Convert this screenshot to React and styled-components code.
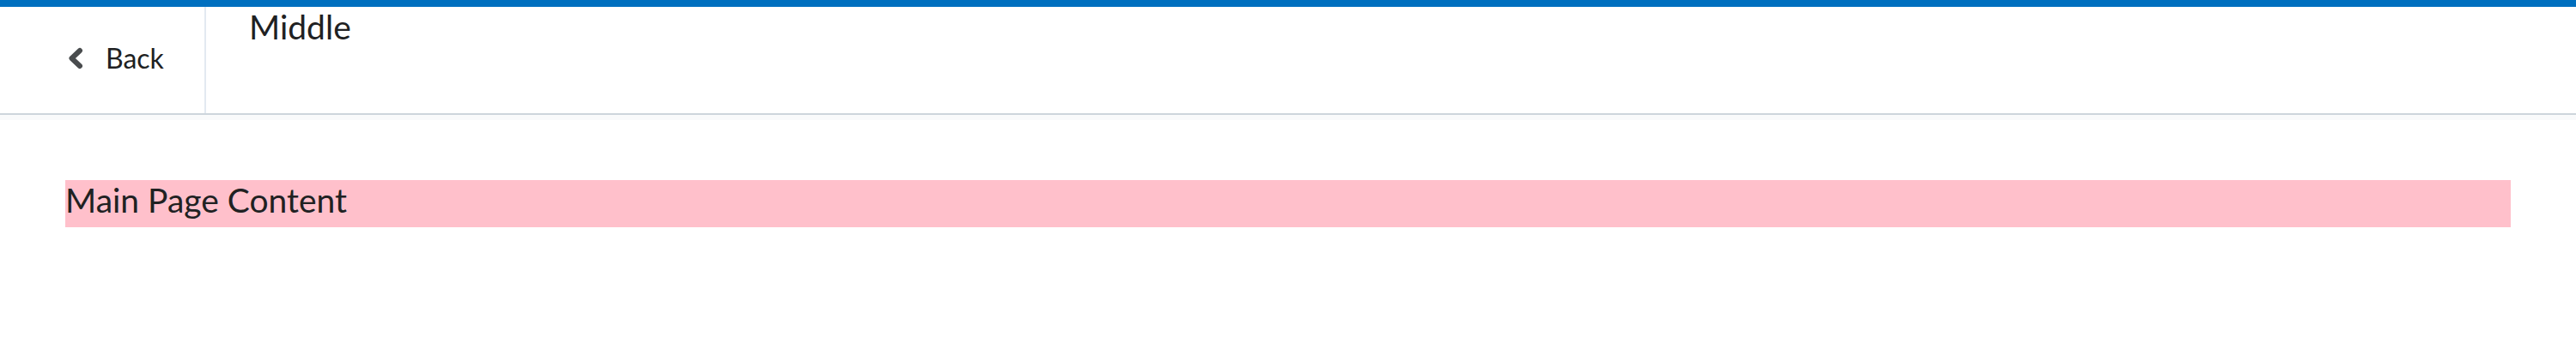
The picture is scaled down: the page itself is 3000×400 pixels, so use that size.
import styled, { createGlobalStyle } from "styled-components";

const GlobalStyle = createGlobalStyle`
  html, body {
    margin: 0;
    padding: 0;
    background: #ffffff;
  }

  body {
    font-family: Lato, "Open Sans", sans-serif;
    color: #202122;
  }
`;

const Header = styled.header`
  display: flex;
  flex-direction: column;
  background: #ffffff;
  border-bottom: 2px solid #cdd5dc;
  box-shadow: 0 6px 0 0 #f9fafb;
`;

const Band = styled.div`
  height: 8px;
  background: #006fbf;
`;

const Bar = styled.div`
  display: flex;
  height: 124px;
`;

const BackSlot = styled.div`
  display: flex;
  align-items: center;
  width: 240px;
  border-right: 2px solid #e3e9f1;
  box-sizing: border-box;
`;

const BackButton = styled.button`
  display: flex;
  align-items: center;
  gap: 26px;
  margin: 0 0 4px 80px;
  padding: 0;
  border: 0;
  background: none;
  font-family: Lato, "Open Sans", sans-serif;
  font-size: 32px;
  line-height: 40px;
  color: #202122;
  cursor: pointer;

  svg {
    display: block;
    width: 17px;
    height: 26px;
  }
`;

const MiddleSlot = styled.div`
  flex: 1;
  padding: 0 0 0 50px;
  font-size: 39px;
  line-height: 40px;
  margin-top: 3px;
`;

const Main = styled.main`
  padding: 76px 76px 0 76px;
`;

const Content = styled.div`
  background: pink;
  font-size: 39px;
  line-height: normal;
  padding-bottom: 9px;
`;

const ChevronLeft = () => (
  <svg viewBox="0 0 17 26" aria-hidden="true">
    <polyline
      points="13,4 3.5,13 13,22"
      fill="none"
      stroke="#494c4e"
      strokeWidth="6"
      strokeLinecap="round"
      strokeLinejoin="round"
    />
  </svg>
);

export default function App() {
  return (
    <>
      <GlobalStyle />
      <Header>
        <Band />
        <Bar>
          <BackSlot>
            <BackButton>
              <ChevronLeft />
              Back
            </BackButton>
          </BackSlot>
          <MiddleSlot>Middle</MiddleSlot>
        </Bar>
      </Header>
      <Main>
        <Content>Main Page Content</Content>
      </Main>
    </>
  );
}
